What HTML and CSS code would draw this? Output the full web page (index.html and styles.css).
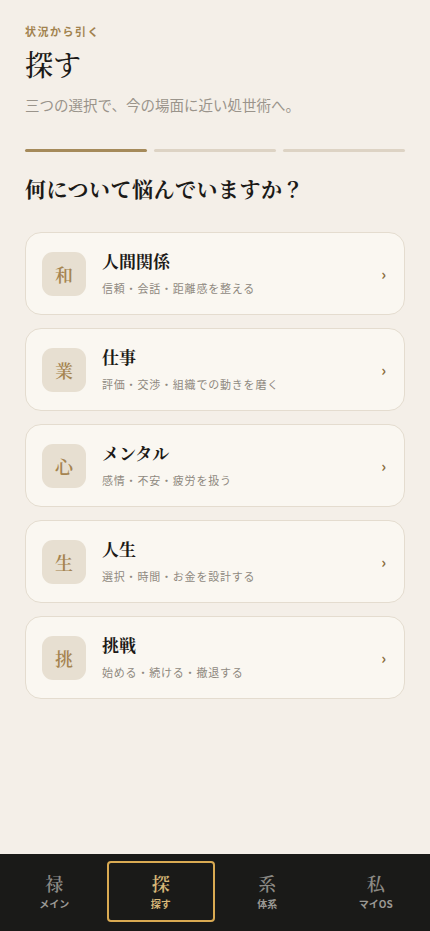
FILE: index.html
```html
<!DOCTYPE html>
<html lang="ja">
<head>
    <meta charset="UTF-8">
    <title>探す</title>
    <link rel="stylesheet" href="styles.css">
</head>
<body>
<div class="page">
    <div class="head">
        <div class="eyebrow">状況から引く</div>
        <h1 class="title">探す</h1>
        <p class="lead">三つの選択で、今の場面に近い処世術へ。</p>
    </div>
    <div class="steps">
        <span class="step on"></span>
        <span class="step"></span>
        <span class="step"></span>
    </div>
    <h2 class="question">何について悩んでいますか？</h2>
    <div class="list">
        <a class="card" href="#">
            <span class="badge">和</span>
            <span class="text">
                <span class="name">人間関係</span>
                <span class="desc">信頼・会話・距離感を整える</span>
            </span>
            <span class="arrow">›</span>
        </a>
        <a class="card" href="#">
            <span class="badge">業</span>
            <span class="text">
                <span class="name">仕事</span>
                <span class="desc">評価・交渉・組織での動きを磨く</span>
            </span>
            <span class="arrow">›</span>
        </a>
        <a class="card" href="#">
            <span class="badge">心</span>
            <span class="text">
                <span class="name">メンタル</span>
                <span class="desc">感情・不安・疲労を扱う</span>
            </span>
            <span class="arrow">›</span>
        </a>
        <a class="card" href="#">
            <span class="badge">生</span>
            <span class="text">
                <span class="name">人生</span>
                <span class="desc">選択・時間・お金を設計する</span>
            </span>
            <span class="arrow">›</span>
        </a>
        <a class="card" href="#">
            <span class="badge">挑</span>
            <span class="text">
                <span class="name">挑戦</span>
                <span class="desc">始める・続ける・撤退する</span>
            </span>
            <span class="arrow">›</span>
        </a>
    </div>
</div>
<nav class="tabbar">
    <a class="tab" href="#"><span class="tab-icon">禄</span><span class="tab-label">メイン</span></a>
    <a class="tab active" href="#"><span class="tab-icon">探</span><span class="tab-label">探す</span></a>
    <a class="tab" href="#"><span class="tab-icon">系</span><span class="tab-label">体系</span></a>
    <a class="tab" href="#"><span class="tab-icon">私</span><span class="tab-label">マイOS</span></a>
</nav>
</body>
</html>
```

FILE: styles.css
```css
* {
    box-sizing: border-box;
}
html, body {
    margin: 0;
    height: 100%;
}
body {
    background: #f4efe8;
    font-family: "Noto Sans CJK JP", "Noto Sans", sans-serif;
    color: #1c1a17;
    display: flex;
    flex-direction: column;
}
a {
    text-decoration: none;
    color: inherit;
}
.page {
    flex: 1;
    padding: 22px 25px 0;
}
.eyebrow {
    font-size: 11px;
    font-weight: 700;
    letter-spacing: 1.5px;
    color: #a2834f;
    line-height: 18px;
}
.title {
    margin: 4px 0 0;
    font-family: "Noto Serif CJK JP", "Noto Sans CJK JP", serif;
    font-size: 28px;
    font-weight: 500;
    line-height: 40px;
}
.lead {
    margin: 10px 0 0;
    font-size: 14.5px;
    color: #9a948b;
    line-height: 22px;
}
.steps {
    display: flex;
    gap: 7px;
    margin-top: 33px;
}
.step {
    flex: 1;
    height: 3px;
    border-radius: 2px;
    background: #ddd3c4;
}
.step.on {
    background: #a58a5a;
}
.question {
    margin: 21px 0 0;
    font-family: "Noto Serif CJK JP", "Noto Sans CJK JP", serif;
    font-size: 21px;
    font-weight: 700;
    letter-spacing: 0.5px;
    line-height: 30px;
}
.list {
    display: flex;
    flex-direction: column;
    gap: 13px;
    margin-top: 29px;
}
.card {
    display: flex;
    align-items: center;
    height: 83px;
    padding: 0 16px;
    background: #faf7f1;
    border: 1px solid #e4dccf;
    border-radius: 16px;
}
.badge {
    width: 44px;
    height: 44px;
    flex: none;
    display: flex;
    align-items: center;
    justify-content: center;
    border-radius: 11px;
    background: #e7dfd1;
    color: #a58450;
    font-family: "Noto Serif CJK JP", "Noto Sans CJK JP", serif;
    font-size: 18px;
    font-weight: 600;
}
.text {
    flex: 1;
    display: flex;
    flex-direction: column;
    margin-left: 16px;
}
.name {
    font-family: "Noto Serif CJK JP", "Noto Sans CJK JP", serif;
    font-size: 17px;
    font-weight: 700;
    line-height: 24px;
    margin-top: -3px;
}
.desc {
    margin-top: 7px;
    font-size: 11px;
    letter-spacing: 0.8px;
    color: #8f897f;
    line-height: 16px;
}
.arrow {
    color: #8a6d40;
    font-size: 15px;
    font-weight: 700;
    margin-right: 2px;
}
.tabbar {
    display: flex;
    height: 77px;
    padding: 7px 0 9px;
    background: #1a1a18;
}
.tab {
    flex: 1;
    display: flex;
    flex-direction: column;
    align-items: center;
    justify-content: center;
    border: 2px solid transparent;
    border-radius: 4px;
}
.tab-icon {
    font-family: "Noto Serif CJK JP", "Noto Sans CJK JP", serif;
    font-size: 18px;
    font-weight: 600;
    color: #8c8a85;
    line-height: 24px;
}
.tab-label {
    font-size: 10px;
    font-weight: 700;
    color: #9a9893;
    line-height: 16px;
    margin-top: 1px;
}
.tab.active {
    border-color: #d9aa52;
    margin: 0 -2px;
}
.tab.active .tab-icon,
.tab.active .tab-label {
    color: #d8b878;
}
```
